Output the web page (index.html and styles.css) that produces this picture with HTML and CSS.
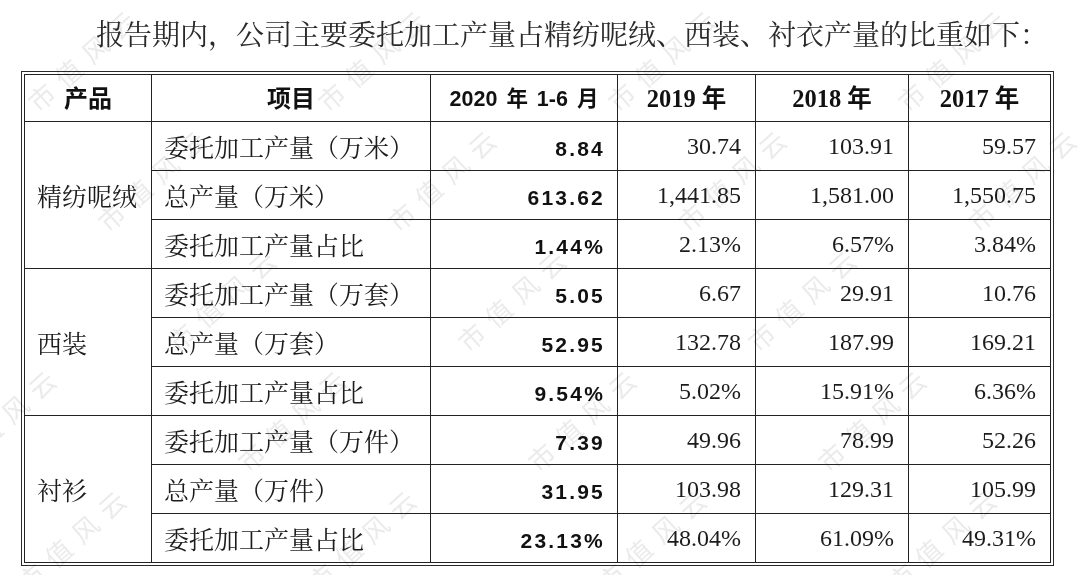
FILE: index.html
```html
<!DOCTYPE html>
<html lang="zh-CN">
<head>
<meta charset="utf-8">
<title>委托加工产量占比</title>
<link rel="stylesheet" href="styles.css">
</head>
<body>
<div class="page">
  <p class="intro">报告期内，公司主要委托加工产量占精纺呢绒、西装、衬衣产量的比重如下：</p>
  <div class="frame">
    <table class="data">
      <colgroup>
        <col class="c-prod"><col class="c-item"><col class="c-y20"><col class="c-y19"><col class="c-y18"><col class="c-y17">
      </colgroup>
      <thead>
        <tr>
          <th class="h-cjk">产品</th>
          <th class="h-cjk">项目</th>
          <th class="h-sans">2020 年 1-6 月</th>
          <th class="h-serif">2019 年</th>
          <th class="h-serif">2018 年</th>
          <th class="h-serif">2017 年</th>
        </tr>
      </thead>
      <tbody>
        <tr>
          <td class="prod" rowspan="3">精纺呢绒</td>
          <td class="item">委托加工产量（万米）</td>
          <td class="num bold">8.84</td><td class="num">30.74</td><td class="num">103.91</td><td class="num">59.57</td>
        </tr>
        <tr>
          <td class="item">总产量（万米）</td>
          <td class="num bold">613.62</td><td class="num">1,441.85</td><td class="num">1,581.00</td><td class="num">1,550.75</td>
        </tr>
        <tr>
          <td class="item">委托加工产量占比</td>
          <td class="num bold">1.44%</td><td class="num">2.13%</td><td class="num">6.57%</td><td class="num">3.84%</td>
        </tr>
        <tr>
          <td class="prod" rowspan="3">西装</td>
          <td class="item">委托加工产量（万套）</td>
          <td class="num bold">5.05</td><td class="num">6.67</td><td class="num">29.91</td><td class="num">10.76</td>
        </tr>
        <tr>
          <td class="item">总产量（万套）</td>
          <td class="num bold">52.95</td><td class="num">132.78</td><td class="num">187.99</td><td class="num">169.21</td>
        </tr>
        <tr>
          <td class="item">委托加工产量占比</td>
          <td class="num bold">9.54%</td><td class="num">5.02%</td><td class="num">15.91%</td><td class="num">6.36%</td>
        </tr>
        <tr>
          <td class="prod" rowspan="3">衬衫</td>
          <td class="item">委托加工产量（万件）</td>
          <td class="num bold">7.39</td><td class="num">49.96</td><td class="num">78.99</td><td class="num">52.26</td>
        </tr>
        <tr>
          <td class="item">总产量（万件）</td>
          <td class="num bold">31.95</td><td class="num">103.98</td><td class="num">129.31</td><td class="num">105.99</td>
        </tr>
        <tr>
          <td class="item">委托加工产量占比</td>
          <td class="num bold">23.13%</td><td class="num">48.04%</td><td class="num">61.09%</td><td class="num">49.31%</td>
        </tr>
      </tbody>
    </table>
  </div>

  <div class="wm-layer" aria-hidden="true">
    <span class="wm" style="left:40px;top:89px">市值风云</span>
    <span class="wm" style="left:330px;top:89px">市值风云</span>
    <span class="wm" style="left:620px;top:89px">市值风云</span>
    <span class="wm" style="left:910px;top:89px">市值风云</span>

    <span class="wm" style="left:110px;top:209px">市值风云</span>
    <span class="wm" style="left:400px;top:209px">市值风云</span>
    <span class="wm" style="left:690px;top:209px">市值风云</span>
    <span class="wm" style="left:980px;top:209px">市值风云</span>

    <span class="wm" style="left:180px;top:329px">市值风云</span>
    <span class="wm" style="left:470px;top:329px">市值风云</span>
    <span class="wm" style="left:760px;top:329px">市值风云</span>

    <span class="wm" style="left:-40px;top:449px">市值风云</span>
    <span class="wm" style="left:250px;top:449px">市值风云</span>
    <span class="wm" style="left:540px;top:449px">市值风云</span>
    <span class="wm" style="left:830px;top:449px">市值风云</span>

    <span class="wm" style="left:30px;top:569px">市值风云</span>
    <span class="wm" style="left:320px;top:569px">市值风云</span>
    <span class="wm" style="left:610px;top:569px">市值风云</span>
    <span class="wm" style="left:900px;top:569px">市值风云</span>
  </div>
</div>
</body>
</html>
```

FILE: styles.css
```css
html, body {
  margin: 0;
  padding: 0;
  background: #ffffff;
}

.page {
  position: relative;
  width: 1080px;
  height: 575px;
  overflow: hidden;
  background: #ffffff;
  font-family: "Noto Serif CJK SC", "Noto Sans CJK SC", serif;
  color: #1c1c1c;
}

.intro {
  margin: 13px 0 0 0;
  padding-left: 96px;
  font-size: 28px;
  line-height: 40px;
  color: #2a2a2a;
  white-space: nowrap;
}

.frame {
  margin: 18px 0 0 21px;
  width: 1027px;
  border: 1px solid #2a2a2a;
  padding: 2px;
}

.data {
  width: 1027px;
  table-layout: fixed;
  border-collapse: collapse;
}

.c-prod { width: 127px; }
.c-item { width: 279px; }
.c-y20  { width: 187px; }
.c-y19  { width: 138px; }
.c-y18  { width: 153px; }
.c-y17  { width: 142px; }

.data th,
.data td {
  border: 1px solid #222222;
  padding: 0;
  vertical-align: middle;
  white-space: nowrap;
}

.data thead tr { height: 47px; }
.data tbody tr { height: 49px; }

.data th {
  text-align: center;
  font-weight: 700;
  color: #111111;
  padding-bottom: 4px;
}

.data .h-cjk {
  font-family: "Noto Sans CJK SC", sans-serif;
  font-size: 24px;
}

.data .h-sans {
  font-family: "Liberation Sans", "Noto Sans CJK SC", sans-serif;
  font-size: 21.5px;
  word-spacing: 3px;
}

.data .h-serif {
  font-family: "Liberation Serif", "Noto Sans CJK SC", serif;
  font-size: 24.5px;
}

.data .prod {
  font-size: 25px;
  padding-left: 12px;
  text-align: left;
}

.data .item {
  font-size: 25px;
  padding-left: 12px;
  text-align: left;
}

.data .num {
  font-family: "Liberation Serif", serif;
  font-size: 24px;
  text-align: right;
  padding-right: 14px;
}

.data .num.bold {
  font-family: "Liberation Sans", sans-serif;
  font-weight: 700;
  font-size: 21px;
  letter-spacing: 2.2px;
  padding-right: 12px;
  padding-top: 5px;
  color: #111111;
}

.wm-layer {
  position: absolute;
  inset: 0;
  pointer-events: none;
  mix-blend-mode: multiply;
}

.wm {
  position: absolute;
  font-family: "Noto Sans CJK SC", sans-serif;
  font-size: 26px;
  line-height: 26px;
  letter-spacing: 10px;
  color: #ebebeb;
  white-space: nowrap;
  transform-origin: 0 100%;
  transform: rotate(-42deg);
}
```
